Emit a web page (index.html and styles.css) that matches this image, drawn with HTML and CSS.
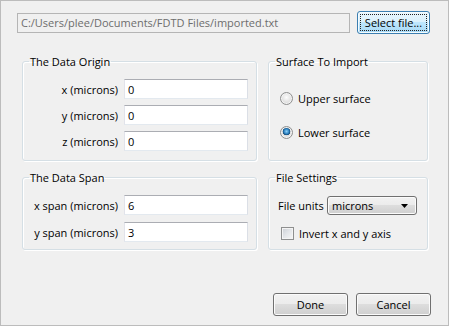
FILE: index.html
```html
<!DOCTYPE html>
<html lang="en">
<head>
    <meta charset="UTF-8">
    <meta name="viewport" content="width=device-width, initial-scale=1.0">
    <title>Import Surface</title>
    <link rel="stylesheet" href="styles.css">
</head>
<body>
    <div class="dialog">
        <div class="path-row">
            <input type="text" class="path" value="C:/Users/plee/Documents/FDTD Files/imported.txt" disabled>
            <button type="button" class="btn btn-focus"><span class="focus-ring">Select file...</span></button>
        </div>

        <div class="groups">
            <fieldset class="group origin">
                <legend>The Data Origin</legend>
                <div class="fields">
                    <label>x (microns)</label>
                    <input type="text" class="field" value="0">
                    <label>y (microns)</label>
                    <input type="text" class="field" value="0">
                    <label>z (microns)</label>
                    <input type="text" class="field" value="0">
                </div>
            </fieldset>

            <fieldset class="group surface">
                <legend>Surface To Import</legend>
                <div class="radios">
                    <div class="radio-row"><span class="radio"></span>Upper surface</div>
                    <div class="radio-row"><span class="radio checked"></span>Lower surface</div>
                </div>
            </fieldset>

            <fieldset class="group span">
                <legend>The Data Span</legend>
                <div class="fields">
                    <label>x span (microns)</label>
                    <input type="text" class="field" value="6">
                    <label>y span (microns)</label>
                    <input type="text" class="field" value="3">
                </div>
            </fieldset>

            <fieldset class="group settings">
                <legend>File Settings</legend>
                <div class="settings-body">
                    <div class="units-row">
                        <span class="units-label">File units</span>
                        <div class="combo">
                            <span>microns</span>
                            <svg width="7" height="4" viewBox="0 0 7 4"><path d="M0 0 H7 L3.5 4 Z" fill="#000"/></svg>
                        </div>
                    </div>
                    <div class="check-row"><span class="checkbox"></span>Invert x and y axis</div>
                </div>
            </fieldset>
        </div>

        <div class="actions">
            <button type="button" class="btn">Done</button>
            <button type="button" class="btn">Cancel</button>
        </div>
    </div>
</body>
</html>
```

FILE: styles.css
```css
body {
    margin: 0;
    background-color: #f0f0f0;
    font-family: "Open Sans", "Noto Sans", sans-serif;
    font-size: 11px;
    color: #000;
}
.dialog {
    width: 449px;
    height: 326px;
    box-sizing: border-box;
    border: 1px solid #bcbcbc;
    padding: 10px 17px 9px 16px;
    display: flex;
    flex-direction: column;
}
input, button {
    font-family: inherit;
    font-size: inherit;
    margin: 0;
}

/* top row */
.path-row {
    display: flex;
    align-items: center;
    gap: 7px;
    margin-right: 1px;
}
.path {
    flex: 1;
    height: 20px;
    box-sizing: border-box;
    padding: 0 3px;
    border: 1px solid #b5b5b5;
    background-color: #f0f0f0;
    color: #6d6d6d;
}
.btn {
    width: 75px;
    height: 23px;
    padding: 0;
    border: 1px solid #707070;
    border-radius: 3px;
    background: linear-gradient(#f2f2f2 0%, #ebebeb 50%, #dddddd 50%, #cfcfcf 100%);
    box-shadow: inset 0 0 0 1px #fbfbfb;
    color: #000;
}
.btn-focus {
    width: 73px;
    padding: 2px;
    border-color: #3c7fb1;
    background: linear-gradient(#eaf6fd 0%, #d9f0fc 50%, #bee6fd 50%, #a7d9f5 100%);
    box-shadow: inset 0 0 0 1px #f4fbfe;
}
.focus-ring {
    display: block;
    height: 100%;
    box-sizing: border-box;
    border: 1px dotted #222;
    line-height: 15px;
}

/* group boxes */
.groups {
    display: grid;
    grid-template-columns: 235px 160px;
    grid-template-rows: 107px 80px;
    column-gap: 11px;
    row-gap: 9px;
    margin: 20px 0 0 5px;
}
.group {
    margin: 0;
    padding: 0;
    border: 1px solid #d5dfe5;
    border-radius: 3px;
    box-shadow: inset 1px 1px 0 #fff, 1px 1px 0 #fff;
    min-width: 0;
}
.group legend {
    margin-left: 6px;
    padding: 0 1px;
    line-height: 15px;
}
.fields {
    display: grid;
    grid-template-columns: 95px 124px;
    column-gap: 6px;
    row-gap: 6px;
    align-items: center;
    padding-top: 10px;
}
.span .fields {
    row-gap: 7px;
}
.fields label {
    text-align: right;
}
.field {
    height: 20px;
    box-sizing: border-box;
    padding: 0 3px;
    border: 1px solid #e3e9ef;
    border-top-color: #abadb3;
    border-left-color: #e2e3ea;
    border-right-color: #dbdfe6;
    background-color: #fff;
}

/* radios */
.radios {
    display: flex;
    flex-direction: column;
    gap: 18px;
    padding: 21px 0 0 11px;
}
.radio-row, .check-row {
    display: flex;
    align-items: center;
    gap: 5px;
    height: 16px;
}
.radio {
    width: 13px;
    height: 13px;
    box-sizing: border-box;
    border: 1px solid #8e8f8f;
    border-radius: 50%;
    background: radial-gradient(circle at 50% 40%, #fdfdfd 0%, #e6e6e6 45%, #cfcfcf 100%);
    box-shadow: inset 0 0 0 1px #f4f4f4;
}
.radio.checked {
    background: radial-gradient(circle at 50% 40%, #8ed1f7 0%, #2a7fbf 30%, #124a77 42%, #dcdcdc 48%, #f4f4f4 100%);
}

/* file settings */
.settings-body {
    display: flex;
    flex-direction: column;
    gap: 10px;
    padding: 11px 0 0 9px;
}
.units-row {
    display: flex;
    align-items: center;
}
.units-label {
    width: 49px;
    flex: none;
    white-space: nowrap;
}
.combo {
    width: 90px;
    height: 19px;
    box-sizing: border-box;
    display: flex;
    align-items: center;
    justify-content: space-between;
    padding: 0 8px 0 4px;
    border: 1px solid #707070;
    border-radius: 3px;
    background: linear-gradient(#f2f2f2 0%, #ebebeb 50%, #dddddd 50%, #cfcfcf 100%);
    box-shadow: inset 0 0 0 1px #fbfbfb;
}
.check-row {
    margin-left: 3px;
}
.checkbox {
    width: 13px;
    height: 13px;
    box-sizing: border-box;
    border: 1px solid #8e8f8f;
    background: linear-gradient(135deg, #cbcfd5 0%, #e4e6e9 50%, #f7f7f7 100%);
    box-shadow: inset 0 0 0 1px #f4f4f4;
}

/* bottom buttons */
.actions {
    margin-top: auto;
    display: flex;
    justify-content: flex-end;
    gap: 8px;
}
```
